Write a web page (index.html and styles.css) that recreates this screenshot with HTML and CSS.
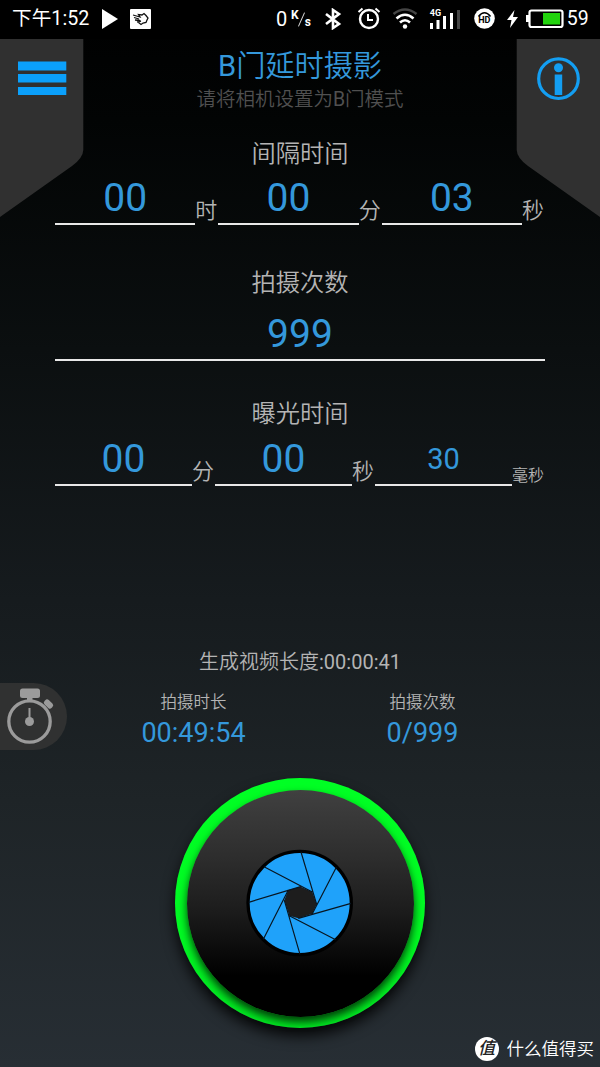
FILE: index.html
```
<!DOCTYPE html>
<html lang="zh-CN">
<head>
    <meta charset="UTF-8">
    <meta name="viewport" content="width=device-width, initial-scale=1.0">
    <title>B门延时摄影</title>
    <link rel="stylesheet" href="styles.css">
</head>
<body>

<div class="status-bar">
    <span class="clock">下午1:52</span>
    <svg class="play" width="16" height="20" viewBox="0 0 16 20"><path d="M0 0L16 10L0 20Z" fill="#fff"/></svg>
    <svg class="gesture" width="21" height="20" viewBox="0 0 21 20">
        <rect width="21" height="20" rx="1" fill="#fff"/>
        <path d="M3 6L10 8L8.500 5.500L12 6L14 4.500L16 6.500L18 9L17 11L16 13.500L13 14L11 15.500L8.500 13.500M4 8.500L9 10M5 11L10 11.500M7 13L11 12" fill="none" stroke="#111" stroke-width="1.300"/>
    </svg>
    <span class="speed">0</span>
    <span class="speed-unit"><b>K</b><i></i><b>s</b></span>
    <svg class="bluetooth" width="18" height="22" viewBox="0 0 18 22"><path d="M2 6L15 16L9 20V2L15 6L2 16" fill="none" stroke="#fff" stroke-width="2.600"/></svg>
    <svg class="alarm" width="24" height="23" viewBox="0 0 24 23">
        <circle cx="12" cy="12" r="9" fill="none" stroke="#fff" stroke-width="2.400"/>
        <path d="M11 7V13H16M1.500 5L5.500 1.500M18.500 1.500L22.500 5" fill="none" stroke="#fff" stroke-width="2"/>
    </svg>
    <svg class="wifi" width="26" height="21" viewBox="0 0 26 21">
        <path d="M1.500 6Q13 -3 24.500 6" fill="none" stroke="#444" stroke-width="2.600"/>
        <path d="M4.500 10.500Q13 3 21.500 10.500M8 14.500Q13 10 18 14.500" fill="none" stroke="#fff" stroke-width="2.600"/>
        <circle cx="13" cy="18.500" r="2.200" fill="#fff"/>
    </svg>
    <span class="signal">
        <small>4G</small>
        <svg width="31" height="20" viewBox="0 0 31 20">
            <path d="M0 14h3v6h-3zM6.500 11h3v9h-3zM13 7h3v13h-3zM20 4h3v16h-3z" fill="#fff"/>
            <path d="M27 1h3v19h-3z" fill="#444"/>
        </svg>
    </span>
    <span class="hd">
        <svg width="21" height="21" viewBox="0 0 21 21">
            <circle cx="10.500" cy="10.500" r="10.300" fill="#fff"/>
            <path d="M4.500 8.500Q10.500 1 16.500 8.500" fill="none" stroke="#000" stroke-width="1.600"/>
        </svg>
        <b>HD</b>
    </span>
    <svg class="bolt" width="11" height="18" viewBox="0 0 11 18"><path d="M7.500 0L0 10H4.500L3 18L11 7H6Z" fill="#fff"/></svg>
    <svg class="battery" width="38" height="20" viewBox="0 0 38 20">
        <rect x="3.500" y="1.500" width="33" height="16.500" rx="2" fill="none" stroke="#fff" stroke-width="2.200"/>
        <rect x="0" y="6" width="3" height="7" fill="#fff"/>
        <rect x="17" y="4" width="17" height="11.500" fill="#22d30d"/>
    </svg>
    <span class="level">59</span>
</div>

<button class="tab tab-left" aria-label="菜单">
    <svg width="84" height="179" viewBox="0 0 84 179">
        <path d="M0 0H83.300V111Q83 119 72 127L0 178Z" fill="#303030"/>
        <path d="M18 22.500h48.300v9h-48.300zM18 35h48.300v8.500h-48.300zM18 48h48.300v8h-48.300z" fill="#0ba0fb"/>
    </svg>
</button>
<button class="tab tab-right" aria-label="说明">
    <svg width="84" height="179" viewBox="0 0 84 179">
        <path d="M84 0H.700V111Q1 119 12 127L84 178Z" fill="#303030"/>
        <circle cx="42.500" cy="39.700" r="19.800" fill="none" stroke="#139ef2" stroke-width="3.200"/>
        <circle cx="42.500" cy="28.800" r="4.500" fill="#139ef2"/>
        <rect x="38.700" y="35.500" width="7.500" height="20.500" fill="#139ef2"/>
    </svg>
</button>

<header>
    <h1><span class="latin">B</span>门延时摄影</h1>
    <p>请将相机设置为<span class="latin">B</span>门模式</p>
</header>

<main>
    <section class="interval">
        <h2>间隔时间</h2>
        <div class="fields">
            <span class="value">00</span><span class="unit">时</span>
            <span class="value">00</span><span class="unit">分</span>
            <span class="value">03</span><span class="unit">秒</span>
        </div>
    </section>
    <section class="count">
        <h2>拍摄次数</h2>
        <div class="fields">
            <span class="value">999</span>
        </div>
    </section>
    <section class="exposure">
        <h2>曝光时间</h2>
        <div class="fields">
            <span class="value">00</span><span class="unit">分</span>
            <span class="value">00</span><span class="unit">秒</span>
            <span class="value small">30</span><span class="unit small">毫秒</span>
        </div>
    </section>
</main>

<p class="video-length">生成视频长度<span class="latin">:00:00:41</span></p>

<div class="summary">
    <div class="timer">
        <svg width="48" height="58" viewBox="0 0 48 58">
            <g fill="#9b9b9b">
                <rect x="13" y="1.500" width="20" height="9.500" rx="2.500"/>
                <rect x="20" y="8" width="5.500" height="6"/>
                <rect x="36.500" y="14" width="10" height="6" rx="2.500" transform="rotate(44 41.500 17)"/>
                <circle cx="22.500" cy="34.500" r="4.500"/>
                <rect x="21.500" y="21" width="2" height="14"/>
            </g>
            <circle cx="22.500" cy="34.500" r="20.700" fill="none" stroke="#9b9b9b" stroke-width="3.300"/>
        </svg>
    </div>
    <dl>
        <dt>拍摄时长</dt>
        <dd>00:49:54</dd>
    </dl>
    <dl>
        <dt>拍摄次数</dt>
        <dd>0/999</dd>
    </dl>
</div>

<button class="shutter" aria-label="开始拍摄">
    <span class="shutter-face">
        <svg width="120" height="120" viewBox="0 0 360 360">
            <circle cx="179" cy="174" r="155" fill="#1fa2fa" stroke="#000" stroke-width="10"/>
            <path d="M182 125L217 141L230 178L217 206L175 220L148 212L133 166L145 135Z" fill="#1d1d1d"/>
            <path d="M183 21L230 178M289 67L217 206M333 175L175 220M287 284L148 212M180 328L133 166M70 283L145 135M26 172L182 125M72 65L217 141" fill="none" stroke="#081520" stroke-width="3.500"/>
        </svg>
    </span>
</button>

<footer>
    <span class="logo">值</span>
    <span>什么值得买</span>
</footer>

</body>
</html>
```
FILE: styles.css
```
* {
    box-sizing: border-box;
}

body {
    position: relative;
    display: flex;
    flex-direction: column;
    align-items: center;
    width: 600px;
    height: 1067px;
    margin: 0;
    overflow: hidden;
    background: linear-gradient(#000 0, #020404 120px, #0b0f10 350px, #161b1e 600px, #1e2427 800px, #272e34 1067px);
    color: #b4b4b4;
    font-family: Roboto, "Noto Sans CJK SC", sans-serif;
    font-weight: 350;
}

h1, h2, p, dl, dd {
    margin: 0;
    font-weight: 350;
}

button {
    padding: 0;
    border: none;
    background: none;
}

svg {
    display: block;
    flex: none;
}

.latin {
    font-weight: 400;
}

/* Status bar */
.status-bar {
    display: flex;
    align-items: center;
    flex: none;
    width: 600px;
    height: 39px;
    padding: 0 11px 2px 12px;
    background: #000;
    color: #fff;
    font-size: 20px;
    font-weight: 400;
    line-height: 38px;
}

.clock {
    width: 90px;
    font-size: 19.700px;
    white-space: nowrap;
}

.gesture {
    margin-left: 12px;
}

.speed {
    width: 12px;
    margin-left: 125px;
}

.speed-unit {
    display: flex;
    margin-left: 3px;
    font-size: 12px;
    line-height: 20px;
}

.speed-unit b:first-child {
    padding-bottom: 8px;
    line-height: 12px;
}

.speed-unit b:last-child {
    padding-top: 6px;
    line-height: 14px;
}

.speed-unit i {
    width: 1px;
    height: 15px;
    margin: 3px 3px 0 2px;
    background: #ddd;
    transform: rotate(24deg);
}

.bluetooth {
    margin-left: 13px;
}

.alarm {
    margin-left: 15px;
}

.wifi {
    margin-left: 11px;
}

.signal, .hd {
    display: grid;
}

.signal {
    margin-left: 12px;
}

.signal > *, .hd > * {
    grid-area: 1 / 1;
}

.signal small {
    font-size: 9px;
    font-weight: 700;
    line-height: 8px;
}

.hd {
    margin-left: 13px;
}

.hd b {
    padding-top: 7px;
    color: #000;
    font-size: 9px;
    line-height: 11px;
    text-align: center;
    z-index: 1;
}

.bolt {
    margin-left: 12px;
}

.battery {
    margin-left: 8px;
}

.level {
    margin-left: 3px;
    font-size: 19.500px;
}

/* Corner tabs hang over the page */
.tab {
    position: absolute;
    top: 39px;
}

.tab-left {
    left: 0;
}

.tab-right {
    right: 0;
}

header {
    height: 99px;
    padding-top: 7px;
    text-align: center;
}

h1 {
    color: #3498db;
    font-size: 29.200px;
    line-height: 40px;
}

header p {
    color: #505050;
    font-size: 19.500px;
    line-height: 27px;
}

/* Settings */
main {
    width: 490px;
    height: 510px;
}

h2 {
    font-size: 24.300px;
    line-height: 32px;
    text-align: center;
}

.fields {
    display: flex;
    align-items: flex-end;
    height: 55px;
}

.interval {
    height: 129px;
}

.count {
    height: 131px;
}

.count .fields {
    height: 62px;
}

.exposure .fields {
    height: 56px;
}

.value {
    flex: 1;
    height: 52px;
    border-bottom: 2px solid #e8e8e8;
    color: #3498db;
    font-size: 39px;
    font-weight: 400;
    line-height: 51px;
    text-align: center;
}

.unit {
    width: 23px;
    font-size: 22px;
    line-height: 29px;
    white-space: nowrap;
}

.value.small {
    font-size: 29px;
}

.unit.small {
    width: 33px;
    font-size: 16px;
    line-height: 21px;
}

.video-length {
    height: 35px;
    font-size: 20px;
    line-height: 28px;
}

/* Totals */
.summary {
    display: flex;
    width: 600px;
    height: 67px;
}

.timer {
    width: 67px;
    height: 67px;
    padding: 4px 0 0 7px;
    border-radius: 0 34px 34px 0;
    background: #303131;
}

.summary dl {
    width: 229px;
    padding-top: 8px;
    text-align: center;
}

.timer + dl {
    margin-left: 12px;
}

dt {
    font-size: 16.500px;
    line-height: 24px;
}

dd {
    color: #3498db;
    font-size: 27px;
    font-weight: 400;
    line-height: 36px;
}

/* Shutter button */
.shutter {
    width: 250px;
    height: 250px;
    margin-top: 28px;
    padding: 11.500px;
    border-radius: 50%;
    background: linear-gradient(#00ff24, #00fa23 60%, #00e820);
    box-shadow: 0 8px 14px rgba(0, 0, 0, 0.85);
}

.shutter-face {
    display: flex;
    justify-content: center;
    width: 227px;
    height: 227px;
    padding-top: 55px;
    border-radius: 50%;
    background: linear-gradient(#404040, #2d2d2d 30%, #1d1d1d 52%, #000 82%);
    box-shadow: 0 5px 9px rgba(0, 0, 0, 0.75);
}

footer {
    display: flex;
    align-items: center;
    align-self: flex-end;
    gap: 8px;
    margin-top: 9px;
    padding-right: 6px;
    color: #fff;
    font-size: 17.500px;
    line-height: 24px;
}

.logo {
    width: 24px;
    height: 24px;
    border-radius: 50%;
    background: #fff;
    color: #222;
    font-size: 17px;
    font-style: italic;
    font-weight: 500;
    line-height: 23px;
    text-align: center;
}
```
